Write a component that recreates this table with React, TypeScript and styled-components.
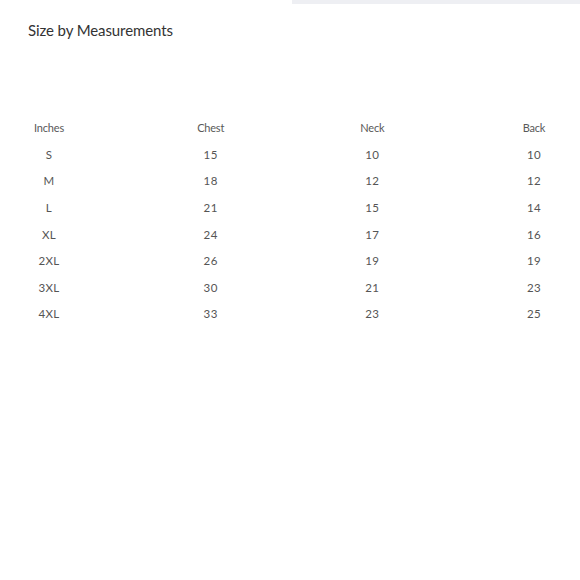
import React from "react";
import styled, { createGlobalStyle } from "styled-components";

const Global = createGlobalStyle`
  html, body { margin: 0; padding: 0; background: #ffffff; }
  body { width: 580px; height: 580px; overflow: hidden; font-family: "Lato", "Liberation Sans", sans-serif; }
`;

const Page = styled.div`
  width: 580px;
  height: 580px;
  display: flex;
  flex-direction: column;
`;

const TopStrip = styled.div`
  align-self: flex-end;
  width: 288px;
  height: 4px;
  background: #eeeff3;
`;

const Title = styled.h1`
  margin: 16px 0 0 28px;
  font-size: 15px;
  font-weight: 400;
  color: #333333;
  line-height: 20px;
  letter-spacing: -0.1px;
`;

const Table = styled.div`
  margin: 75px 6px 0 9px;
  display: grid;
  grid-template-columns: repeat(4, 80px);
  justify-content: space-between;
  grid-auto-rows: 26.57px;
  align-items: center;
`;

const Cell = styled.div<{ $head?: boolean }>`
  text-align: center;
  font-size: ${(p) => (p.$head ? "11px" : "11.5px")};
  color: ${(p) => (p.$head ? "#595959" : "#555555")};
  line-height: 14px;
  letter-spacing: ${(p) => (p.$head ? "-0.2px" : "0.4px")};
`;

const headers = ["Inches", "Chest", "Neck", "Back"];
const rows = [
  ["S", "15", "10", "10"],
  ["M", "18", "12", "12"],
  ["L", "21", "15", "14"],
  ["XL", "24", "17", "16"],
  ["2XL", "26", "19", "19"],
  ["3XL", "30", "21", "23"],
  ["4XL", "33", "23", "25"],
];

export default function App() {
  return (
    <Page>
      <Global />
      <TopStrip />
      <Title>Size by Measurements</Title>
      <Table>
        {headers.map((h) => (
          <Cell key={h} $head>
            {h}
          </Cell>
        ))}
        {rows.map((r) =>
          r.map((c, i) => <Cell key={r[0] + i}>{c}</Cell>)
        )}
      </Table>
    </Page>
  );
}
